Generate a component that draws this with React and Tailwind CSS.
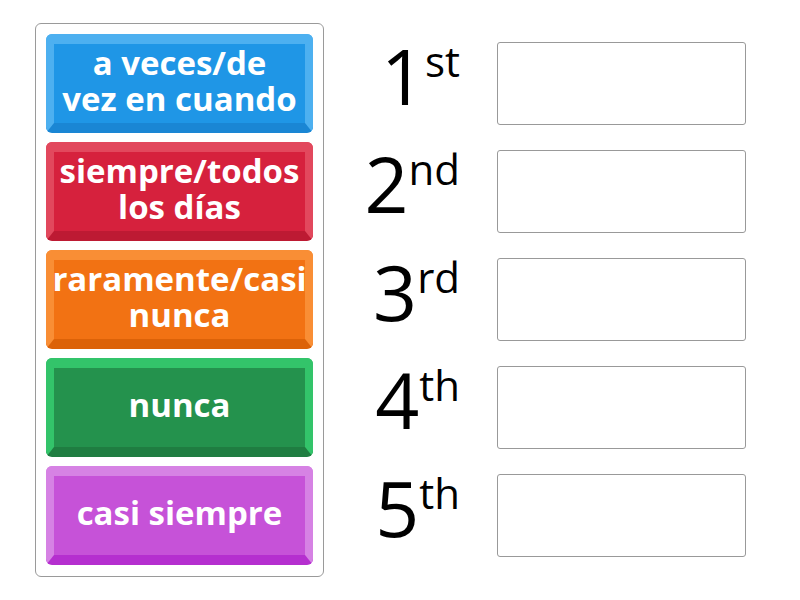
import React from "react";

const cards = [
  { text: ["a veces/de", "vez en cuando"], face: "bg-[#1f96e6]", edge: "border-[#4db0f0]", bottom: "border-b-[#1a86d4]" },
  { text: ["siempre/todos", "los días"], face: "bg-[#d6213d]", edge: "border-[#e2485d]", bottom: "border-b-[#bd1a33]" },
  { text: ["raramente/casi", "nunca"], face: "bg-[#f27213]", edge: "border-[#f98e35]", bottom: "border-b-[#dc6208]" },
  { text: ["nunca"], face: "bg-[#24924d]", edge: "border-[#33c46a]", bottom: "border-b-[#1f7d41]" },
  { text: ["casi siempre"], face: "bg-[#c652d8]", edge: "border-[#d682e4]", bottom: "border-b-[#b52fcf]" },
];

const places = [
  ["1", "st"],
  ["2", "nd"],
  ["3", "rd"],
  ["4", "th"],
  ["5", "th"],
];

const Card = ({ card }) => (
  <div
    className={`h-[99px] rounded-md border-x-[8px] border-t-[10px] border-b-[10px] ${card.edge} ${card.bottom} ${card.face} pb-[6px] flex flex-col items-center justify-center text-white font-bold text-[33px] leading-[36px]`}
  >
    {card.text.map((t) => (
      <span key={t} className="whitespace-nowrap">{t}</span>
    ))}
  </div>
);

export default function App() {
  return (
    <div className="w-[800px] h-[600px] bg-white flex pl-[35px] pt-[23px] font-['Open_Sans',sans-serif]">
      <div className="w-[289px] h-[554px] border border-[#9a9a9a] rounded-md p-[10px] flex flex-col gap-[9px]">
        {cards.map((c, i) => (
          <Card key={i} card={c} />
        ))}
      </div>

      <div className="pt-[11px] flex flex-col gap-[9px]">
        {places.map(([n, s], i) => (
          <div key={i} className="h-[99px] flex items-center">
            <div className="w-[136px] mb-[16px] flex justify-end items-start text-black">
              <span className="text-[77px] leading-none">{n}</span>
              <span className="text-[42px] leading-none mt-[3px]">{s}</span>
            </div>
            <div className="ml-[37px] w-[249px] h-[83px] border border-[#999] rounded-[3px]" />
          </div>
        ))}
      </div>
    </div>
  );
}
